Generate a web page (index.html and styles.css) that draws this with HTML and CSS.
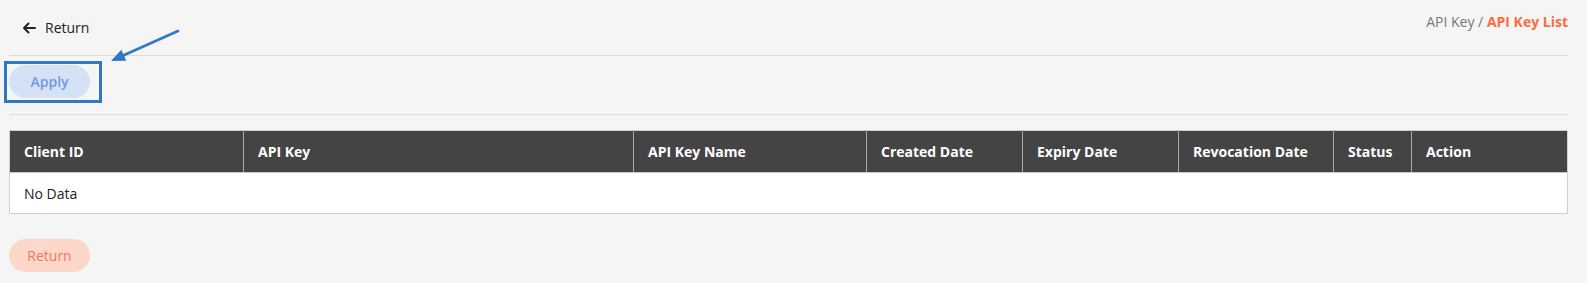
FILE: index.html
```html
<!DOCTYPE html>
<html>
<head>
<meta charset="utf-8">
<link rel="stylesheet" href="styles.css">
</head>
<body>
<div class="page">
  <div class="topbar">
    <a class="back">
      <svg class="back-icon" width="14" height="12" viewBox="0 0 14 12"><path d="M13 6H2M6.5 1.5L2 6l4.5 4.5" fill="none" stroke="#222" stroke-width="2" stroke-linecap="round" stroke-linejoin="round"/></svg>
      <span>Return</span>
    </a>
    <div class="crumbs"><span class="crumb">API Key</span><span class="sep"> / </span><span class="crumb-active">API Key List</span></div>
  </div>
  <div class="actions">
    <div class="apply-wrap">
      <button class="btn btn-apply">Apply</button>
      <div class="annot-box"></div>
    </div>
  </div>
  <table class="grid">
    <colgroup>
      <col style="width:234px"><col style="width:390px"><col style="width:233px"><col style="width:156px"><col style="width:156px"><col style="width:155px"><col style="width:78px"><col>
    </colgroup>
    <thead>
      <tr><th>Client ID</th><th>API Key</th><th>API Key Name</th><th>Created Date</th><th>Expiry Date</th><th>Revocation Date</th><th>Status</th><th>Action</th></tr>
    </thead>
    <tbody>
      <tr><td colspan="8">No Data</td></tr>
    </tbody>
  </table>
  <div class="footer">
    <button class="btn btn-return">Return</button>
  </div>
</div>
<svg class="annot-arrow" width="90" height="45" viewBox="0 0 90 45">
  <line x1="75" y1="3" x2="19" y2="28" stroke="#2f78c4" stroke-width="2.5" stroke-linecap="round"/>
  <polygon points="8,33 18.4,21.8 23.3,32.8" fill="#2f78c4"/>
</svg>
</body>
</html>
```
FILE: styles.css
```css
html, body {
  margin: 0;
  padding: 0;
  background: #f5f5f5;
  font-family: "Open Sans", "Noto Sans", sans-serif;
  font-size: 14px;
  color: #333;
}
.page {
  position: relative;
  padding: 0 19px 0 9px;
}
.topbar {
  height: 55px;
  display: flex;
  justify-content: space-between;
  border-bottom: 1px solid #dcdcdc;
}
.back {
  display: flex;
  align-items: center;
  gap: 9px;
  padding-left: 13px;
  color: #222;
  cursor: pointer;
}
.back span { font-size: 14px; }
.crumbs {
  padding-top: 12px;
  font-size: 14px;
  color: #777;
}
.crumb-active {
  color: #ff6b3d;
  font-weight: 700;
}
.actions {
  height: 58px;
  display: flex;
  align-items: flex-start;
  border-bottom: 1px solid #dcdcdc;
}
.apply-wrap {
  position: relative;
  margin-top: 9px;
}
.btn {
  border: none;
  height: 33px;
  width: 81px;
  border-radius: 17px;
  font-family: "Open Sans", "Noto Sans", sans-serif;
  font-size: 14px;
  font-weight: 600;
  padding: 0;
}
.btn-apply {
  background: #d5e2f6;
  color: #7399e2;
  display: block;
}
.annot-box {
  position: absolute;
  left: -5px;
  top: -4px;
  width: 92px;
  height: 36px;
  border: 3px solid #2f78c4;
}
.grid {
  margin-top: 15px;
  width: 100%;
  border-collapse: collapse;
  table-layout: fixed;
  border: 1px solid #cfcfcf;
  background: #fff;
}
.grid th {
  background: #444;
  color: #fff;
  font-weight: 700;
  text-align: left;
  height: 41px;
  padding: 0 0 0 14px;
  border-left: 1px solid #aaa;
  border-bottom: 1px solid #c8c8c8;
  font-size: 14px;
}
.grid th:first-child { border-left: none; }
.grid td {
  height: 40px;
  padding: 0 0 0 14px;
  color: #222;
}
.footer {
  padding-top: 25px;
}
.btn-return {
  background: #fdd8ca;
  color: #f27651;
  font-weight: 500;
}
.annot-arrow {
  position: absolute;
  left: 103px;
  top: 28px;
}
```
